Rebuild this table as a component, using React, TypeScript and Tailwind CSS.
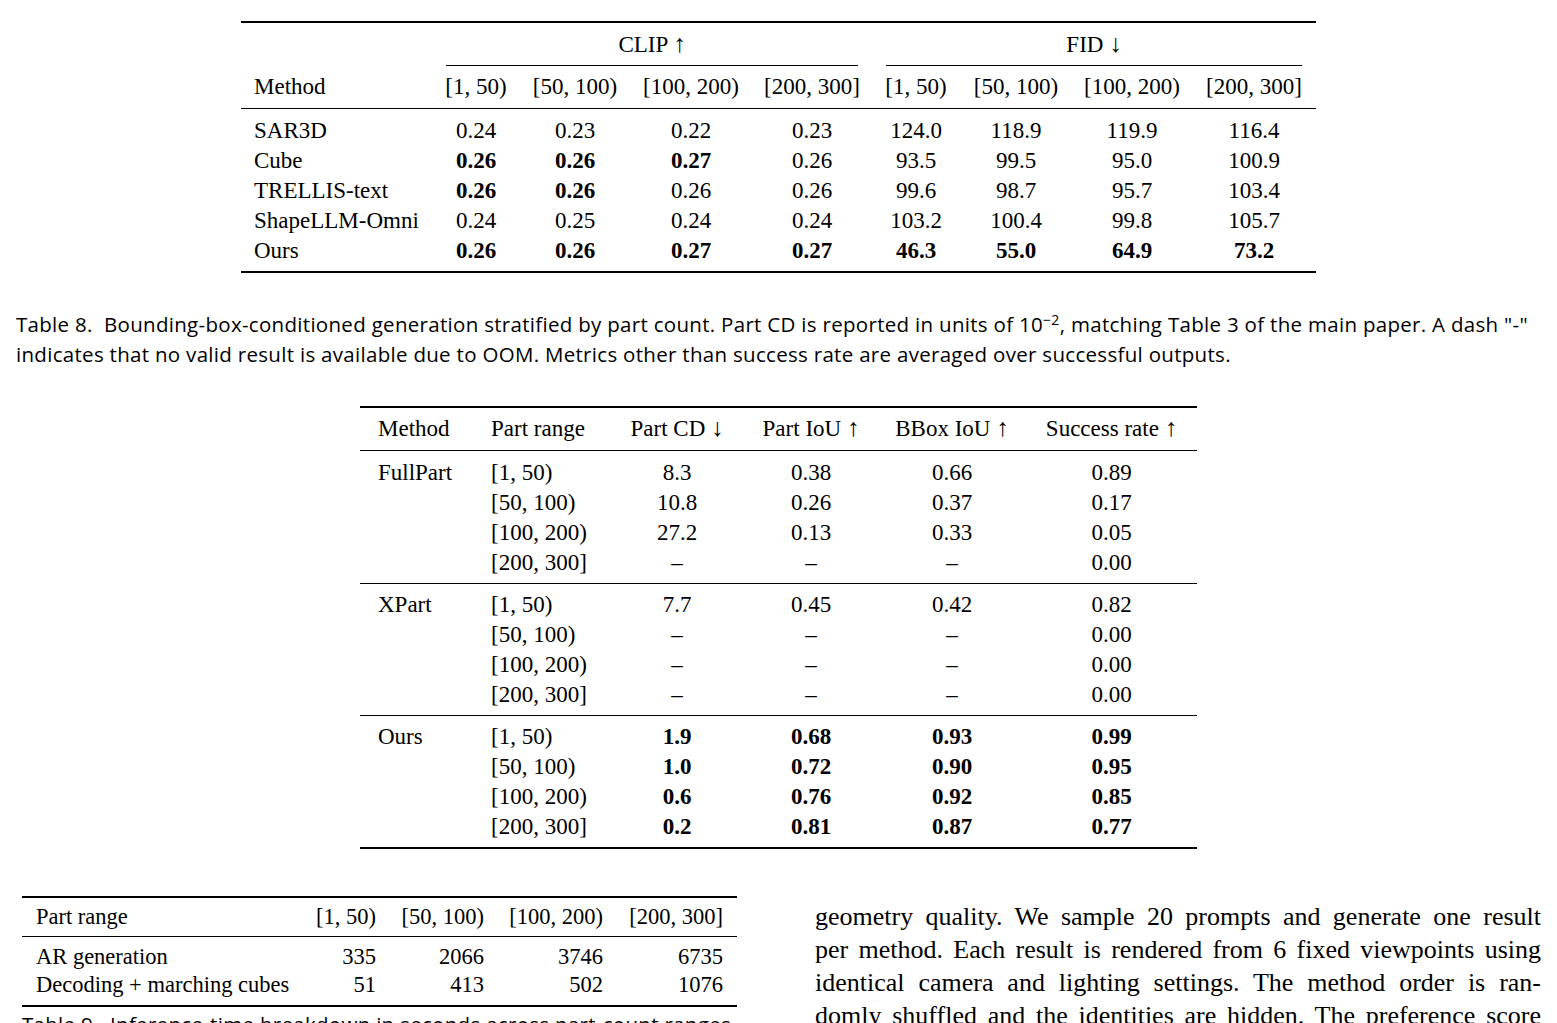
const serif = { fontFamily: '"Liberation Serif", "DejaVu Serif", serif' };
const sans = { fontFamily: '"Open Sans", Lato, sans-serif' };

const ranges = ['[1, 50)', '[50, 100)', '[100, 200)', '[200, 300]'];

interface MetricRow {
  name: string;
  vals: string[];
  bold: number[];
}

const clipFidRows: MetricRow[] = [
  { name: 'SAR3D', vals: ['0.24', '0.23', '0.22', '0.23', '124.0', '118.9', '119.9', '116.4'], bold: [] },
  { name: 'Cube', vals: ['0.26', '0.26', '0.27', '0.26', '93.5', '99.5', '95.0', '100.9'], bold: [0, 1, 2] },
  { name: 'TRELLIS-text', vals: ['0.26', '0.26', '0.26', '0.26', '99.6', '98.7', '95.7', '103.4'], bold: [0, 1] },
  { name: 'ShapeLLM-Omni', vals: ['0.24', '0.25', '0.24', '0.24', '103.2', '100.4', '99.8', '105.7'], bold: [] },
  { name: 'Ours', vals: ['0.26', '0.26', '0.27', '0.27', '46.3', '55.0', '64.9', '73.2'], bold: [0, 1, 2, 3, 4, 5, 6, 7] },
];

const bboxGroups = [
  {
    method: 'FullPart',
    bold: false,
    rows: [
      ['8.3', '0.38', '0.66', '0.89'],
      ['10.8', '0.26', '0.37', '0.17'],
      ['27.2', '0.13', '0.33', '0.05'],
      ['–', '–', '–', '0.00'],
    ],
  },
  {
    method: 'XPart',
    bold: false,
    rows: [
      ['7.7', '0.45', '0.42', '0.82'],
      ['–', '–', '–', '0.00'],
      ['–', '–', '–', '0.00'],
      ['–', '–', '–', '0.00'],
    ],
  },
  {
    method: 'Ours',
    bold: true,
    rows: [
      ['1.9', '0.68', '0.93', '0.99'],
      ['1.0', '0.72', '0.90', '0.95'],
      ['0.6', '0.76', '0.92', '0.85'],
      ['0.2', '0.81', '0.87', '0.77'],
    ],
  },
];

const timingRows = [
  { label: 'AR generation', vals: ['335', '2066', '3746', '6735'] },
  { label: 'Decoding + marching cubes', vals: ['51', '413', '502', '1076'] },
];

const bodyLines = [
  'geometry quality. We sample 20 prompts and generate one result',
  'per method. Each result is rendered from 6 fixed viewpoints using',
  'identical camera and lighting settings. The method order is ran-',
  'domly shuffled and the identities are hidden. The preference score',
];

const grid7 = 'grid grid-cols-[191px_88px_110px_122px_120px_88px_112px_120px_124px]';
const grid8 = 'grid grid-cols-[115px_135px_134px_134px_148px_171px]';
const grid9 = 'grid grid-cols-[284px_84px_108px_119px_120px]';

// arrows in Liberation Serif come out tiny, so size them up a bit
function Up() {
  return <span className="text-[25px] leading-none">↑</span>;
}
function Down() {
  return <span className="text-[25px] leading-none">↓</span>;
}

function ClipFidTable() {
  return (
    <div className="mx-auto mt-[21px] w-[1075px] text-[23px] leading-[30px] text-black" style={serif}>
      <div className="h-[2px] bg-black" />
      {/* group header */}
      <div className={grid7}>
        <div />
        <div className="col-span-4 mx-[14px] h-[43px] border-b border-black pt-[7px] text-center">
          CLIP <Up />
        </div>
        <div className="col-span-4 mx-[14px] h-[43px] border-b border-black pt-[7px] text-center">
          FID <Down />
        </div>
      </div>
      <div className={`${grid7} border-b border-black pt-[6px] pb-[6px]`}>
        <div className="pl-[13px]">Method</div>
        {[...ranges, ...ranges].map((r, i) => (
          <div key={i} className="text-center whitespace-nowrap">{r}</div>
        ))}
      </div>
      <div className="pt-[7px] pb-[5px]">
        {clipFidRows.map((row) => (
          <div key={row.name} className={grid7}>
            <div className="pl-[13px] whitespace-nowrap">{row.name}</div>
            {row.vals.map((v, i) => (
              <div key={i} className={`text-center ${row.bold.includes(i) ? 'font-bold' : ''}`}>{v}</div>
            ))}
          </div>
        ))}
      </div>
      <div className="h-[2px] bg-black" />
    </div>
  );
}

function Caption8() {
  return (
    <div className="mt-[36px] text-[20.5px] leading-[30px] tracking-[0.3px] text-black" style={sans}>
      <div className="h-[30px] whitespace-nowrap">
        Table 8.&nbsp; Bounding-box-conditioned generation stratified by part count. Part CD is reported in units of 10
        <sup className="text-[14px] leading-none">−2</sup>, matching Table 3 of the main paper. A dash "-"
      </div>
      <div className="whitespace-nowrap">
        indicates that no valid result is available due to OOM. Metrics other than success rate are averaged over successful outputs.
      </div>
    </div>
  );
}

function BBoxTable() {
  return (
    <div className="mx-auto mt-[37px] w-[837px] text-[23px] leading-[30px] text-black" style={serif}>
      <div className="h-[2px] bg-black" />
      <div className={`${grid8} h-[43px] border-b border-black pt-[6px]`}>
        <div className="pl-[18px]">Method</div>
        <div className="pl-[16px] whitespace-nowrap">Part range</div>
        <div className="text-center whitespace-nowrap">Part CD <Down /></div>
        <div className="text-center whitespace-nowrap">Part IoU <Up /></div>
        <div className="text-center whitespace-nowrap">BBox IoU <Up /></div>
        <div className="text-center whitespace-nowrap">Success rate <Up /></div>
      </div>
      {bboxGroups.map((g, gi) => (
        <div
          key={g.method}
          className={`pb-[5px] ${gi === 0 ? 'pt-[7px]' : 'pt-[6px]'} ${gi < bboxGroups.length - 1 ? 'border-b border-black' : ''}`}
        >
          {g.rows.map((vals, ri) => (
            <div key={ri} className={grid8}>
              <div className="pl-[18px]">{ri === 0 ? g.method : ''}</div>
              <div className="pl-[16px] whitespace-nowrap">{ranges[ri]}</div>
              {vals.map((v, i) => (
                <div key={i} className={`text-center ${g.bold ? 'font-bold' : ''}`}>{v}</div>
              ))}
            </div>
          ))}
        </div>
      ))}
      <div className="h-[2px] bg-black" />
    </div>
  );
}

function TimingTable() {
  return (
    <div className="mx-auto mt-[47px] w-[715px] text-black" style={serif}>
      <div className="h-[2px] bg-black" />
      <div className="text-[22.5px] leading-[28px]">
        <div className={`${grid9} border-b border-black pt-[5px] pb-[5px]`}>
          <div className="pl-[14px]">Part range</div>
          {ranges.map((r) => (
            <div key={r} className="pr-[14px] text-right whitespace-nowrap">{r}</div>
          ))}
        </div>
        <div className="pt-[6px] pb-[6px]">
          {timingRows.map((row) => (
            <div key={row.label} className={grid9}>
              <div className="pl-[14px] whitespace-nowrap">{row.label}</div>
              {row.vals.map((v, i) => (
                <div key={i} className="pr-[14px] text-right">{v}</div>
              ))}
            </div>
          ))}
        </div>
      </div>
      <div className="h-[2px] bg-black" />
      <p className="mt-[2px] text-[20.5px] leading-[30px] tracking-[0.3px] whitespace-nowrap" style={sans}>
        Table 9.&nbsp; Inference-time breakdown in seconds across part-count ranges.
      </p>
    </div>
  );
}

export default function App() {
  return (
    <div className="h-[1023px] w-[1557px] overflow-hidden bg-white px-[16px]">
      <ClipFidTable />
      <Caption8 />
      <BBoxTable />
      <div className="flex gap-[72px]">
        <div className="w-[727px] shrink-0">
          <TimingTable />
        </div>
        <div className="mt-[51px] w-[726px] text-[26px] leading-[33px] text-black" style={serif}>
          {bodyLines.map((line) => (
            <div key={line} className="text-justify whitespace-nowrap [text-align-last:justify]">
              {line}
            </div>
          ))}
        </div>
      </div>
    </div>
  );
}
